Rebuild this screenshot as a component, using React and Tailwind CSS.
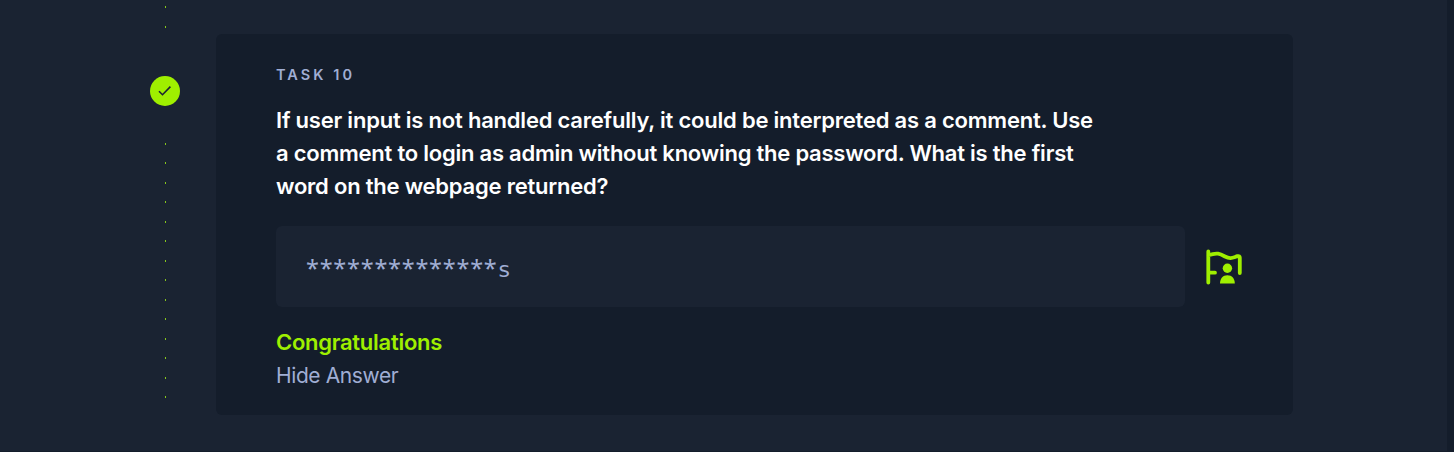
const QUESTION = [
  { text: "If user input is not handled carefully, it could be interpreted as a comment. Use", cls: "tracking-[-0.21px]" },
  { text: "a comment to login as admin without knowing the password. What is the first", cls: "tracking-[-0.235px]" },
  { text: "word on the webpage returned?", cls: "tracking-[-0.22px]" },
];

function Dots({ count }) {
  return (
    <div className="flex flex-col gap-[17.54px]">
      {Array.from({ length: count }, (_, i) => (
        <span key={i} className="h-[2px] w-px shrink-0 bg-[#87c81c]" />
      ))}
    </div>
  );
}

function Timeline() {
  return (
    <div className="flex w-[30px] flex-col items-center pt-[6px]">
      <Dots count={2} />
      <div className="mt-[48px] mb-[37px] flex size-[30px] shrink-0 items-center justify-center rounded-full bg-[#9fef00]">
        <svg width="14" height="12" viewBox="0 0 14 12" fill="none" stroke="#1a2332" strokeWidth="1.6">
          <path d="M1 6.2 4.5 9.7 12.4 1.6" />
        </svg>
      </div>
      <Dots count={14} />
    </div>
  );
}

function FlagUserIcon() {
  return (
    <svg width="37" height="38" viewBox="0 0 37 38" fill="none" className="mt-[2px]">
      <path
        d="M3.3 2.4V33.6M3.3 23.7H10M3.3 6.3C12.5 3 15.5 5 20 7.5C25.5 10.5 28 8.5 32.5 7.2Q34.8 6.6 34.8 8.8V24"
        stroke="#9fef00"
        strokeWidth="3.8"
        strokeLinecap="round"
        strokeLinejoin="round"
      />
      <circle cx="22.4" cy="19.3" r="4.7" fill="#9fef00" />
      <path d="M15 34.5C15 29.8 17.8 26.3 22.4 26.3S29.8 29.8 29.8 34.5Z" fill="#9fef00" />
    </svg>
  );
}

export default function App() {
  return (
    <div className="flex h-[452px] w-full flex-col overflow-hidden bg-[#141d2b] font-['Inter',sans-serif]">
      <div className="flex h-[451px] w-[1447px] bg-[#1a2332] pl-[150px]">
        <Timeline />
        <main className="mt-[34px] ml-[36px] h-[381px] w-[1077px] rounded-md bg-[#141d2b] pt-[30px] pr-[51px] pl-[60px]">
          <div className="text-[14.5px] leading-[21px] font-semibold tracking-[3.05px] text-[#a0aed4]">TASK 10</div>
          <h2 className="mt-[19px] text-[22px] leading-[33px] font-semibold text-white">
            {QUESTION.map((line) => (
              <span key={line.text} className={`block whitespace-nowrap ${line.cls}`}>{line.text}</span>
            ))}
          </h2>
          <div className="mt-[23px] flex items-center justify-between">
            <div className="flex h-[81px] w-[909px] items-baseline rounded-md bg-[#1a2332] pt-[26px] pl-[30px] text-[#a0aed4]">
              <span className="font-['Noto_Sans',sans-serif] text-[23.5px] leading-[33px] tracking-[0.73px]">**************</span>
              <span className="ml-px font-['DejaVu_Sans',sans-serif] text-[22px] leading-[33px]">s</span>
            </div>
            <FlagUserIcon />
          </div>
          <div className="mt-[18px] text-[22px] leading-[34px] font-semibold text-[#9fef00]">
            <span className="tracking-[-0.27px]">Congratulations</span>
          </div>
          <button className="block text-[21px] leading-[34px] tracking-[-0.4px] text-[#a0aed4]">
            <span>Hide Answer</span>
          </button>
        </main>
      </div>
    </div>
  );
}
